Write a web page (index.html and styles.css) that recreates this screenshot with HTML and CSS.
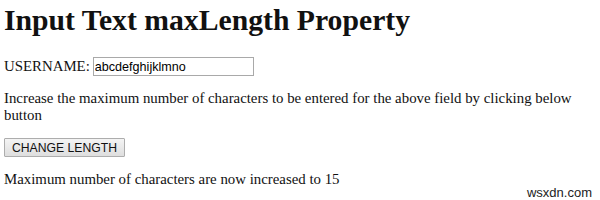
FILE: index.html
```html
<!DOCTYPE html>
<html>
<head>
<meta charset="utf-8">
<link rel="stylesheet" href="styles.css">
</head>
<body>
<h1 class="title">Input Text maxLength Property</h1>
<p class="row">USERNAME: <input type="text" class="field" value="abcdefghijklmno"></p>
<p class="info">Increase the maximum number of characters to be entered for the above field by clicking below button</p>
<p class="btn-row"><button class="btn">CHANGE LENGTH</button></p>
<p class="result">Maximum number of characters are now increased to 15</p>
<div class="mark">wsxdn.com</div>
</body>
</html>
```
FILE: styles.css
```css
html, body { background: #fff; }
body {
  margin: 0 4px;
  font-family: "Liberation Serif", "Times New Roman", serif;
  font-size: 14.85px;
  line-height: 17px;
  color: #111;
  position: relative;
  height: 200px;
  overflow: hidden;
}
.title {
  font-size: 29.7px;
  line-height: 32px;
  font-weight: bold;
  margin: 4px 0 0;
}
.row {
  margin: 21px 0 0;
  height: 19px;
  display: flex;
  align-items: center;
  gap: 3px;
}
.info { margin: 14px 0 0; width: 580px; }
.btn-row { margin: 14px 0 0; height: 19px; display: flex; }
.result { margin: 14px 0 0; }
.field {
  font-family: "Liberation Sans", Arial, sans-serif;
  font-size: 12.6px;
  width: 161px;
  height: 19px;
  box-sizing: border-box;
  border: 1px solid #a9a9a9;
  padding: 1px 1px;
  margin: 0;
  color: #000;
}
.btn {
  font-family: "Liberation Sans", Arial, sans-serif;
  font-size: 12.2px;
  height: 19px;
  width: 121px;
  box-sizing: border-box;
  padding: 0 6px;
  border: 1px solid #adadad;
  background: linear-gradient(#f4f4f4, #dedede);
  color: #111;
  border-radius: 1px;
  margin: 0;
}
.mark {
  position: absolute;
  right: 4px;
  top: 184px;
  font-family: "Liberation Sans", Arial, sans-serif;
  font-size: 13px;
  color: #222;
}
```
